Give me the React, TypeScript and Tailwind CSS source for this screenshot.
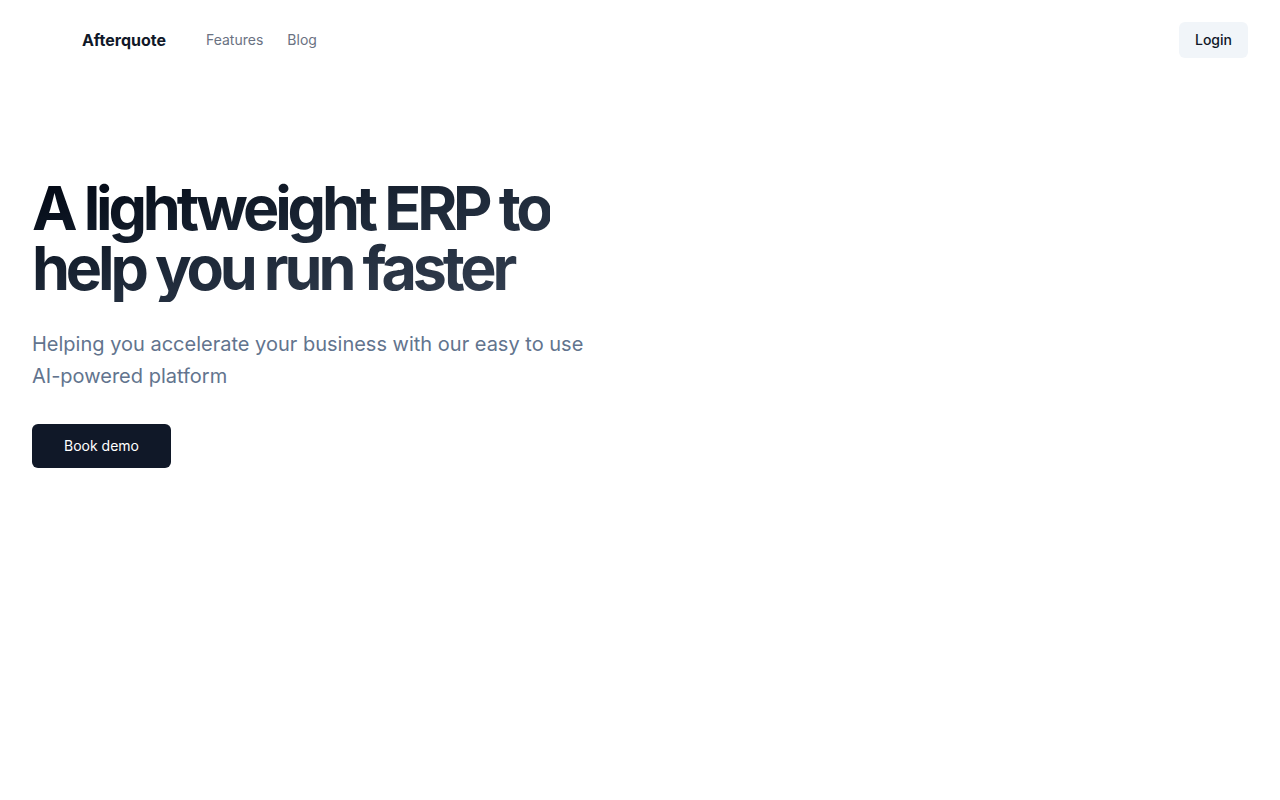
export default function App() {
  return (
    <div className="min-h-screen bg-white font-['Inter',sans-serif] text-gray-900">
      <header className="flex items-center justify-between px-8 py-[22px]">
        <div className="flex items-center">
          <div className="w-[50px] h-9" />
          <a href="#" className="text-base font-bold text-gray-900">
            Afterquote
          </a>
          <nav className="flex items-center gap-6 ml-10 text-sm text-gray-500">
            <a href="#">Features</a>
            <a href="#">Blog</a>
          </nav>
        </div>
        <button className="h-9 px-4 rounded-md bg-slate-100 text-sm font-medium text-gray-900">
          Login
        </button>
      </header>

      <main className="px-8 pt-[98px]">
        <h1 className="w-fit text-[61px] leading-[60px] font-bold tracking-[-0.068em] bg-gradient-to-br from-gray-950 via-gray-800 to-gray-700 bg-clip-text text-transparent pb-1">
          A lightweight ERP to
          <br />
          help you run faster
        </h1>
        <p className="mt-[26px] max-w-[560px] text-xl leading-8 text-slate-500">
          Helping you accelerate your business with our easy to use
          AI-powered platform
        </p>
        <button className="mt-8 h-11 w-[139px] rounded-md bg-gray-900 text-sm text-white">
          Book demo
        </button>
      </main>
    </div>
  );
}
